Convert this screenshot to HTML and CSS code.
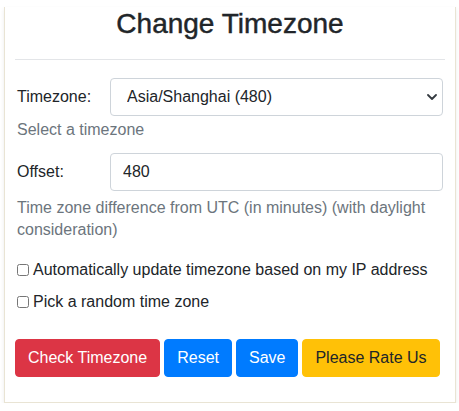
FILE: index.html
```html
<!DOCTYPE html>
<html>
<head>
<meta charset="utf-8">
<link rel="stylesheet" href="styles.css">
</head>
<body>
<div class="panel">
  <h1 class="title">Change Timezone</h1>
  <hr class="sep">
  <div class="row">
    <label class="lbl">Timezone:</label>
    <select class="control select">
      <option>Asia/Shanghai (480)</option>
    </select>
  </div>
  <div class="help help-first">Select a timezone</div>
  <div class="row row-offset">
    <label class="lbl">Offset:</label>
    <input class="control" type="text" value="480">
  </div>
  <div class="help help-offset">Time zone difference from UTC (in minutes) (with daylight consideration)</div>
  <label class="check check-first"><input type="checkbox"> Automatically update timezone based on my IP address</label>
  <label class="check"><input type="checkbox"> Pick a random time zone</label>
  <div class="buttons">
    <button class="btn btn-red">Check Timezone</button>
    <button class="btn btn-blue">Reset</button>
    <button class="btn btn-blue">Save</button>
    <button class="btn btn-yellow">Please Rate Us</button>
  </div>
</div>
</body>
</html>
```
FILE: styles.css
```css
html, body {
  margin: 0;
  padding: 0;
  background: #ffffff;
}
body {
  font-family: "Liberation Sans", Arial, sans-serif;
  font-size: 16px;
  line-height: 1.5;
  color: #212529;
}
.panel {
  box-sizing: border-box;
  width: 452px;
  margin: 0 0 0 4px;
  padding: 0 10px 25px 10px;
  background: #ffffff;
  border: 1px solid #e9e4d4;
  border-top: none;
  box-shadow: 0 2px 4px rgba(0, 0, 0, 0.08);
}
.title {
  margin: 7px 0 0;
  font-size: 28px;
  font-weight: 500;
  line-height: 1.2;
  text-align: center;
  color: #212529;
  -webkit-text-stroke: 0.45px #212529;
}
.sep {
  margin: 18px 0 0;
  border: 0;
  border-top: 1px solid #e3e5e8;
}
.row {
  display: grid;
  grid-template-columns: 93px 1fr;
  align-items: center;
  margin-top: 18px;
  padding-left: 2px;
}
.row-offset {
  margin-top: 11px;
}
.lbl {
  font-size: 16px;
}
.control {
  box-sizing: border-box;
  width: 333px;
  height: 38px;
  padding: 6px 12px 6px 12px;
  font-family: inherit;
  font-size: 16px;
  color: #212529;
  background: #ffffff;
  border: 1px solid #ced4da;
  border-radius: 4px;
  outline: none;
}
.select {
  appearance: none;
  -webkit-appearance: none;
  padding-left: 16px;
  background-image: url("data:image/svg+xml,%3Csvg xmlns='http://www.w3.org/2000/svg' width='10' height='6' viewBox='0 0 10 6'%3E%3Cpath d='M1 1l4 4 4-4' fill='none' stroke='%23343a40' stroke-width='1.8' stroke-linecap='round' stroke-linejoin='round'/%3E%3C/svg%3E");
  background-repeat: no-repeat;
  background-position: right 5px center;
}
.help {
  margin-top: 2px;
  padding-left: 2px;
  color: #6c757d;
  line-height: 22px;
}
.help-first {
  line-height: 24px;
}
.help-offset {
  margin-top: 6px;
}
.check {
  display: flex;
  align-items: center;
  padding-left: 2px;
  line-height: 24px;
}
.check-first {
  margin-top: 17px;
}
.check input {
  width: 12px;
  height: 12px;
  margin: 0 4px 0 0;
}
.check + .check {
  margin-top: 8px;
}
.buttons {
  display: flex;
  gap: 4px;
  margin-top: 25px;
}
.btn {
  height: 38px;
  padding: 6px 12px;
  font-family: inherit;
  font-size: 16px;
  line-height: 24px;
  border: 1px solid transparent;
  border-radius: 4px;
  color: #ffffff;
}
.btn-red {
  background: #dc3545;
  border-color: #dc3545;
}
.btn-blue {
  background: #007bff;
  border-color: #007bff;
}
.btn-yellow {
  background: #ffc107;
  border-color: #ffc107;
  color: #212529;
}
```
